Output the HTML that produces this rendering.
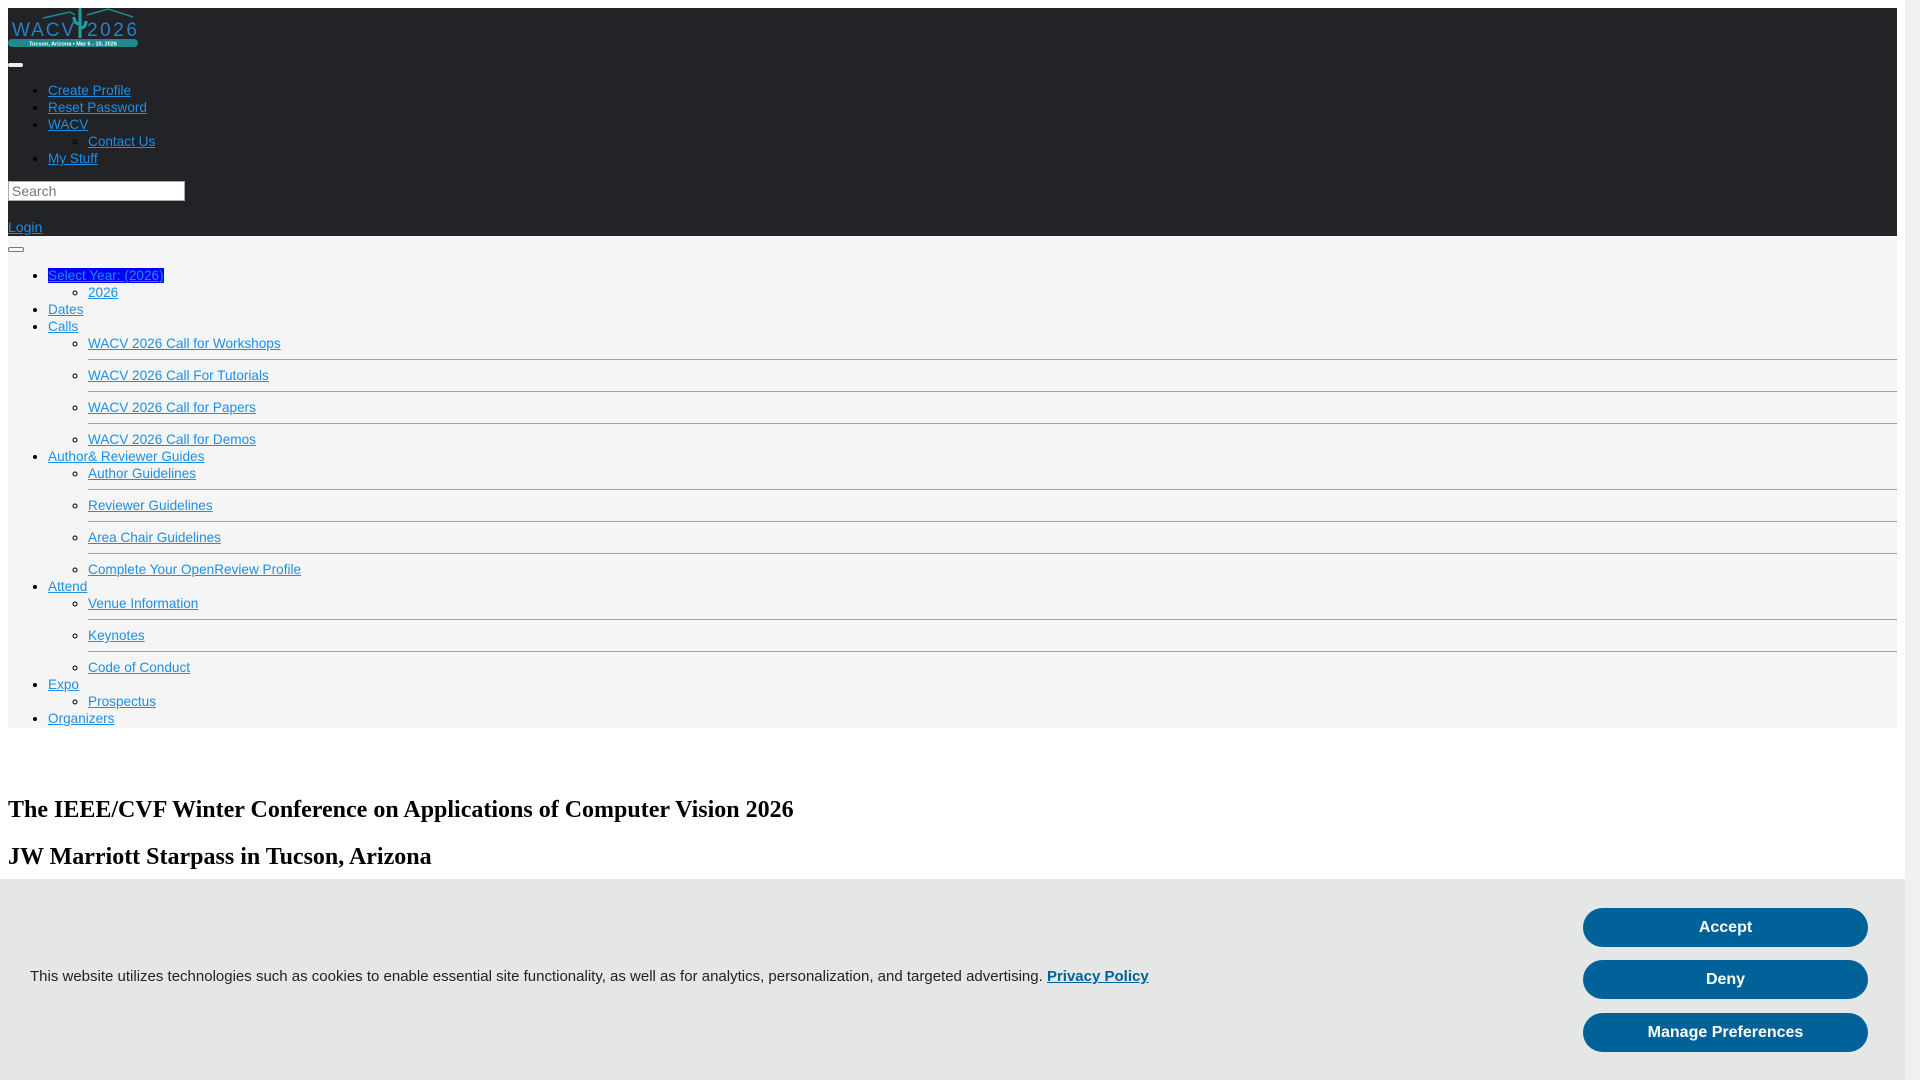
<!DOCTYPE html>
<html><head><meta charset="utf-8"><style>
html,body{margin:0;padding:0;background:#fff;width:1920px;height:1080px;overflow:hidden;font-family:"Liberation Sans",sans-serif;}
a{color:#1e8fe6;text-decoration:underline;}
.hdr{position:absolute;left:8px;top:8px;width:1889px;height:228px;background:#212327;}
.nav{position:absolute;left:8px;top:236px;width:1889px;height:492px;background:#f5f5f5;}
ul{margin:0;padding-left:40px;font-size:13.6px;line-height:17px;}
li{list-style:disc;}
ul ul li{list-style:circle;}
ul.sep>li{padding:7px 0;border-bottom:1.5px solid #a0a0a0;}
ul.sep>li:first-child{padding-top:0;}
ul.sep>li:last-child{padding-bottom:0;border-bottom:none;}
.abs{position:absolute;}
h2{position:absolute;left:8px;margin:0;font-family:"Liberation Serif",serif;font-size:24px;font-weight:bold;color:#000;}
.btn{position:absolute;left:1583px;width:285px;height:39px;border-radius:20px;background:#01629a;color:#fff;font-weight:bold;font-size:16px;text-align:center;line-height:39px;}
.sb{position:absolute;left:1905px;top:0;width:15px;height:1080px;background:#f0f0f0;}
</style></head><body>
<div class="hdr">
 <svg class="abs" style="left:0;top:0" width="132" height="42" viewBox="0 0 132 42">
  <path d="M35 10 L62 4 L67 7" stroke="#1a8a93" stroke-width="1.5" fill="none"/>
  <path d="M79 7 L100 1 L125 9" stroke="#1a8a93" stroke-width="1.5" fill="none"/>
  <path d="M72 0 V30 M72 16 Q66 16 66 9 M72 20 Q78 20 78 13" stroke="#18a3a6" stroke-width="3" fill="none"/>
  <text x="4" y="28" font-family="Liberation Sans" font-size="19" fill="#2b7fc3" textLength="62">WACV</text>
  <text x="79" y="28" font-family="Liberation Sans" font-size="19" fill="#2b7fc3" textLength="50">2026</text>
  <rect x="0" y="31" width="130" height="8" rx="4" fill="#1c8a8e"/>
  <text x="65" y="37.5" text-anchor="middle" font-family="Liberation Sans" font-size="5.5" font-weight="bold" fill="#fff">Tucson, Arizona • Mar 6 - 10, 2026</text>
 </svg>
 <div class="abs" style="left:0;top:55px;width:15px;height:4px;background:#eee;border-radius:2px"></div>
 <ul class="abs" style="left:0;top:74px;color:#000">
  <li><a href="#">Create Profile</a></li>
  <li><a href="#">Reset Password</a></li>
  <li><a href="#">WACV</a><ul><li><a href="#">Contact Us</a></li></ul></li>
  <li><a href="#">My Stuff</a></li>
 </ul>
 <div class="abs" style="left:0;top:173px;height:18px;background:#fff;border:1px solid #aaa;font-size:14px;line-height:18px;color:#777;padding-left:3px;width:172px">Search</div>
 <a class="abs" href="#" style="left:0;top:211px;font-size:14px;line-height:17px">Login</a>
</div>
<div class="nav">
 <div class="abs" style="left:0;top:11px;width:14px;height:3px;border:1px solid #777;border-radius:2px"></div>
 <ul class="abs" style="left:0;top:31px;width:1849px">
  <li><a href="#" style="background:#0000ff;color:#1e8fe6">Select Year: (2026)</a><ul><li><a href="#">2026</a></li></ul></li>
  <li><a href="#">Dates</a></li>
  <li><a href="#">Calls</a><ul class="sep">
   <li><a href="#">WACV 2026 Call for Workshops</a></li>
   <li><a href="#">WACV 2026 Call For Tutorials</a></li>
   <li><a href="#">WACV 2026 Call for Papers</a></li>
   <li><a href="#">WACV 2026 Call for Demos</a></li></ul></li>
  <li><a href="#">Author&amp; Reviewer Guides</a><ul class="sep">
   <li><a href="#">Author Guidelines</a></li>
   <li><a href="#">Reviewer Guidelines</a></li>
   <li><a href="#">Area Chair Guidelines</a></li>
   <li><a href="#">Complete Your OpenReview Profile</a></li></ul></li>
  <li><a href="#">Attend</a><ul class="sep">
   <li><a href="#">Venue Information</a></li>
   <li><a href="#">Keynotes</a></li>
   <li><a href="#">Code of Conduct</a></li></ul></li>
  <li><a href="#">Expo</a><ul><li><a href="#">Prospectus</a></li></ul></li>
  <li><a href="#">Organizers</a></li>
 </ul>
</div>
<h2 style="top:797px">The IEEE/CVF Winter Conference on Applications of Computer Vision 2026</h2>
<h2 style="top:844px">JW Marriott Starpass in Tucson, Arizona</h2>
<div class="abs" style="left:0;top:879px;width:1905px;height:201px;background:#e5e7e7">
 <div class="abs" style="left:30px;top:88px;font-size:15px;line-height:20px;color:#222">This website utilizes technologies such as cookies to enable essential site functionality, as well as for analytics, personalization, and targeted advertising. <a href="#" style="color:#01629a;font-weight:bold">Privacy Policy</a></div>
</div>
<div class="btn" style="top:908px">Accept</div>
<div class="btn" style="top:960px">Deny</div>
<div class="btn" style="top:1013px">Manage Preferences</div>
<div class="sb"></div>
</body></html>
